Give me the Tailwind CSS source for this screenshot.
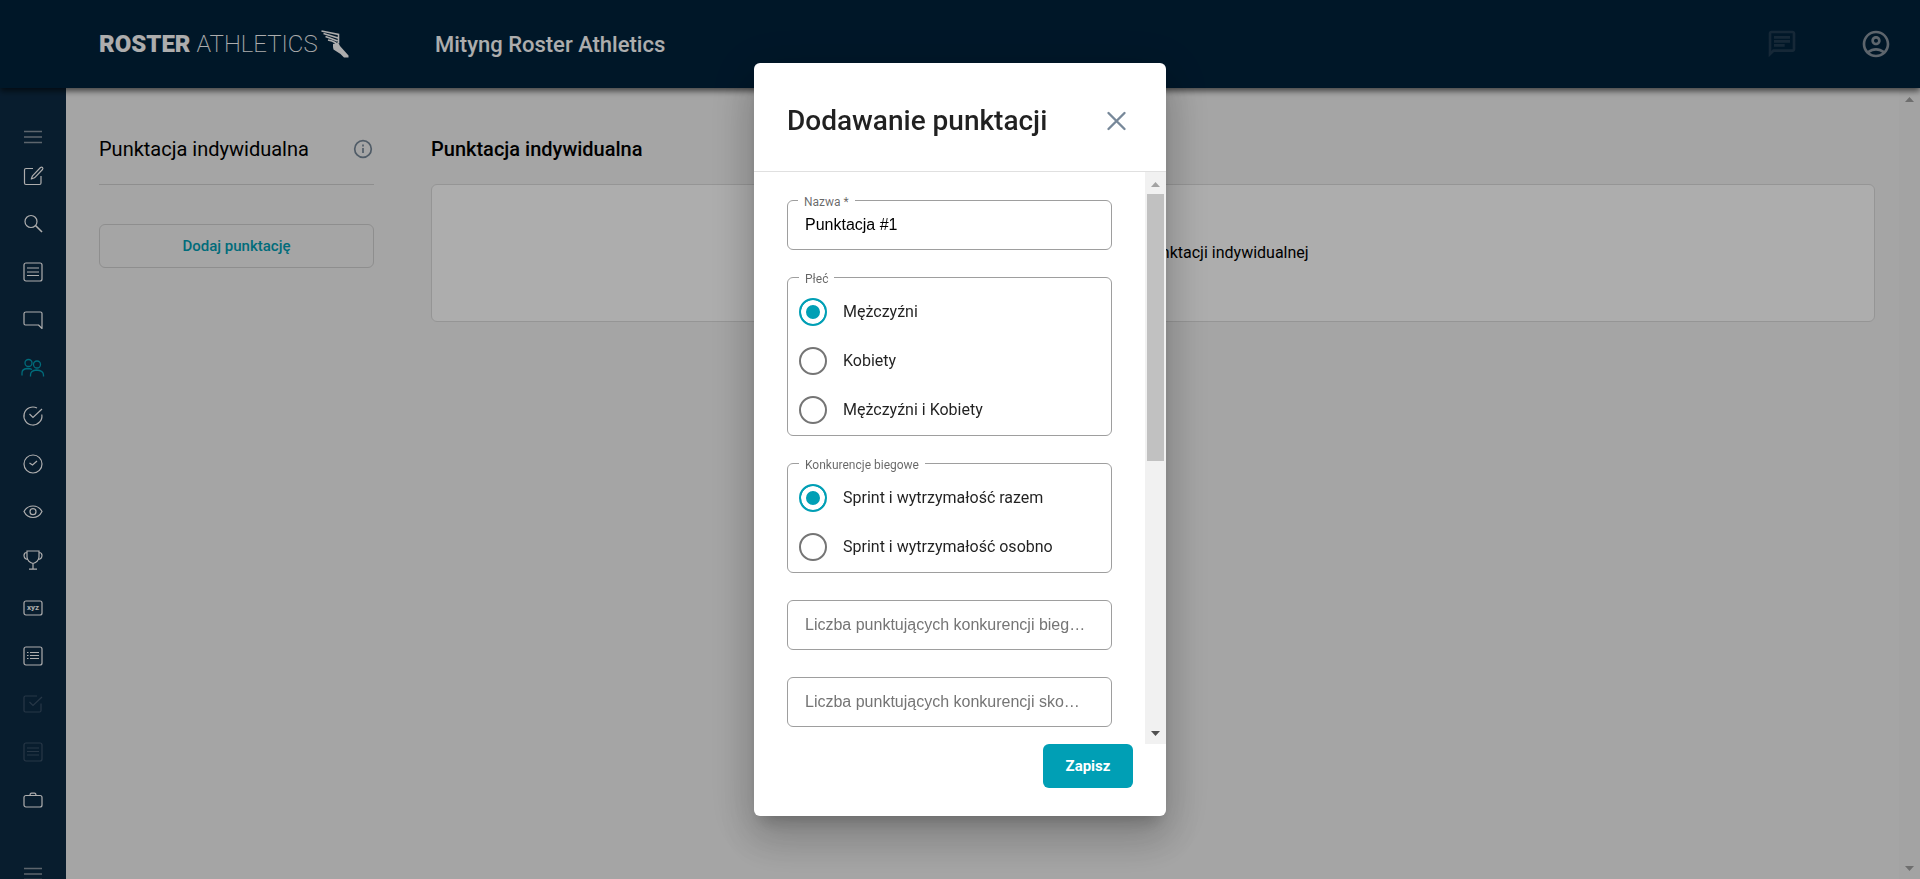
<!DOCTYPE html>
<html lang="pl">
<head>
    <meta charset="UTF-8">
    <meta name="viewport" content="width=device-width, initial-scale=1.0">
    <title>Mityng Roster Athletics - Punktacja indywidualna</title>
    <script src="https://cdn.jsdelivr.net/npm/@tailwindcss/browser@4"></script>
</head>
<body class="h-screen overflow-hidden bg-[#f3f3f3] font-[Roboto,sans-serif] text-base text-black">
    <div class="flex h-full flex-col">
        <!-- Top bar -->
        <header class="relative z-10 flex h-22 shrink-0 items-center bg-[#00223c] pr-7 pl-[99px] text-white shadow-[0_3px_6px_rgba(0,0,0,0.6)]">
            <a href="#" class="flex w-[336px] items-center text-2xl whitespace-nowrap">
                <span class="font-black">ROSTER</span><span class="ml-1.5 font-extralight">ATHLETICS</span>
                <svg class="ml-[3px]" width="28" height="28" viewBox="0 0 28 28">
                    <path d="M12 14 14 13.500 18 14 19 16 23 20.500 27.500 25.500V27.500H23L19.500 24 12.500 19.500 12 17z" fill="currentColor"/>
                    <path d="M.5 1 8 2.500 17.500 4.500V13L14 14M2.500 3.500 9 5.500 17 8M4.500 6.500 10 8.500 16.500 11M7 10l4 1 4 2" fill="none" stroke="currentColor" stroke-width="1.600"/>
                </svg>
            </a>
            <h1 class="text-[22px] font-medium">Mityng Roster Athletics</h1>
            <div class="ml-auto flex items-center gap-[62px]">
                <button type="button" aria-label="Wiadomości" class="text-[#213c52]">
                    <svg width="32" height="32" viewBox="0 0 24 24" fill="currentColor"><path d="M4 4h16v12H5.170L4 17.170V4m0-2c-1.100 0-1.990.9-1.990 2L2 22l4-4h14c1.100 0 2-.9 2-2V4c0-1.100-.9-2-2-2H4zm2 10h8v2H6v-2zm0-3h12v2H6V9zm0-3h12v2H6V6z"/></svg>
                </button>
                <button type="button" aria-label="Konto" class="text-[#8995a0]">
                    <svg width="32" height="32" viewBox="0 0 24 24" fill="currentColor"><path d="M12 2C6.480 2 2 6.480 2 12s4.480 10 10 10 10-4.480 10-10S17.520 2 12 2zM7.350 18.500C8.660 17.560 10.260 17 12 17s3.340.56 4.650 1.500C15.340 19.440 13.740 20 12 20s-3.340-.56-4.650-1.500zm10.790-1.380C16.450 15.800 14.320 15 12 15s-4.450.8-6.140 2.120C4.700 15.730 4 13.950 4 12c0-4.420 3.580-8 8-8s8 3.580 8 8c0 1.950-.7 3.730-1.860 5.120zM12 6c-1.930 0-3.500 1.570-3.500 3.500S10.070 13 12 13s3.500-1.570 3.500-3.500S13.930 6 12 6zm0 5c-.83 0-1.500-.67-1.500-1.500S11.170 8 12 8s1.500.67 1.500 1.500S12.830 11 12 11z"/></svg>
                </button>
            </div>
        </header>

        <div class="flex min-h-0 flex-1">
            <!-- Side navigation -->
            <nav class="flex w-[66px] shrink-0 flex-col items-center overflow-hidden bg-[#0d2b45] pt-[34px] text-white">
                <button type="button" aria-label="Menu" class="flex h-[30px] shrink-0 items-center">
                    <svg width="24" height="24" viewBox="0 0 24 24" fill="none" stroke="#8a96a1" stroke-width="1.300"><path d="M3 6.500h18M3 12h18M3 17.500h18"/></svg>
                </button>
                <a href="#" aria-label="Edycja" class="flex h-12 shrink-0 items-center">
                    <svg width="24" height="24" viewBox="0 0 24 24" fill="none" stroke="currentColor" stroke-width="1.200" stroke-linejoin="round"><path d="M12 4.500H5Q3.500 4.500 3.500 6v13q0 1.500 1.500 1.500h13.500q1.500 0 1.500-1.500V12M19.500 3.500q1-.8 2 0 .8 1 0 2l-8 8.300-3.200 1.200 1.200-3.200z"/></svg>
                </a>
                <a href="#" aria-label="Szukaj" class="flex h-12 shrink-0 items-center">
                    <svg width="24" height="24" viewBox="0 0 24 24" fill="none" stroke="currentColor" stroke-width="1.200"><circle cx="10" cy="9.500" r="6"/><path d="m14.500 13.500 6.500 6.500" stroke-width="1.600"/></svg>
                </a>
                <a href="#" aria-label="Lista" class="flex h-12 shrink-0 items-center">
                    <svg width="24" height="24" viewBox="0 0 24 24" fill="none" stroke="currentColor" stroke-width="1.200"><rect x="3" y="3" width="18" height="18" rx="2"/><path d="M6 8h12M6 12h12M6 15.500h12"/></svg>
                </a>
                <a href="#" aria-label="Komunikaty" class="flex h-12 shrink-0 items-center">
                    <svg width="24" height="24" viewBox="0 0 24 24" fill="none" stroke="currentColor" stroke-width="1.200" stroke-linejoin="round"><path d="M5 4h14.500Q21 4 21 5.500V20.500l-3.500-3.500H4.500Q3 17 3 15.500v-10Q3 4 5 4z"/></svg>
                </a>
                <a href="#" aria-label="Punktacja" class="flex h-12 shrink-0 items-center text-[#009fb5]">
                    <svg width="24" height="24" viewBox="0 0 24 24" fill="none" stroke="currentColor" stroke-width="1.300"><circle cx="7.500" cy="7" r="3.500"/><circle cx="16" cy="8.500" r="3.500"/><path d="M1 19.500V17q0-4 5-4.500 3.500 0 5 1M9.500 20.500V19q0-4.500 6-5 7 .5 7 5v1.500"/></svg>
                </a>
                <a href="#" aria-label="Zatwierdzanie" class="flex h-12 shrink-0 items-center">
                    <svg width="24" height="24" viewBox="0 0 24 24" fill="none" stroke="currentColor" stroke-width="1.200"><path d="M16 4A9 9 0 1 0 20.800 10.500M8.500 10l3.500 3.500L21 5"/></svg>
                </a>
                <a href="#" aria-label="Czas" class="flex h-12 shrink-0 items-center">
                    <svg width="24" height="24" viewBox="0 0 24 24" fill="none" stroke="currentColor" stroke-width="1.200"><circle cx="12" cy="12" r="9"/><path d="m8.500 11 3 2 4.500-4"/></svg>
                </a>
                <a href="#" aria-label="Podgląd" class="flex h-12 shrink-0 items-center">
                    <svg width="24" height="24" viewBox="0 0 24 24" fill="none" stroke="currentColor" stroke-width="1.200"><path d="M3 11.500Q6 6 12 6t9 5.500q-3 6-9 6t-9-6z"/><circle cx="12" cy="11.700" r="3"/></svg>
                </a>
                <a href="#" aria-label="Wyniki" class="flex h-12 shrink-0 items-center">
                    <svg width="24" height="24" viewBox="0 0 24 24" fill="none" stroke="currentColor" stroke-width="1.200"><path d="M6 3h12v6q-.5 5-6 6.500-5.500-1.500-6-6.500zM6 4.500Q3 4.500 3 7.500 3.200 11 6.500 11.500M18 4.500q3 0 3 3-.2 3.500-3.500 4M12 15.500V21M8 21.200h8"/></svg>
                </a>
                <a href="#" aria-label="XYZ" class="flex h-12 shrink-0 items-center">
                    <svg width="24" height="24" viewBox="0 0 24 24" fill="none" stroke="currentColor" stroke-width="1.200"><rect x="3" y="5" width="18" height="14" rx="2"/><text x="12" y="13.500" text-anchor="middle" font-size="8" font-weight="700" fill="currentColor" stroke="none">xyz</text></svg>
                </a>
                <a href="#" aria-label="Listy startowe" class="flex h-12 shrink-0 items-center">
                    <svg width="24" height="24" viewBox="0 0 24 24" fill="none" stroke="currentColor" stroke-width="1.200"><rect x="3" y="3" width="18" height="18" rx="2"/><path d="M9 8.500h9M9 11.500h9M9 14.500h9M6 8.500h1.500M6 11.500h1.500M6 14.500h1.500"/></svg>
                </a>
                <a href="#" aria-label="Potwierdzenia" class="flex h-12 shrink-0 items-center text-[#3a5268]">
                    <svg width="24" height="24" viewBox="0 0 24 24" fill="none" stroke="currentColor" stroke-width="1.200"><path d="M16 4H4.500Q3 4 3 5.500v13Q3 20 4.500 20h14q1.500 0 1.500-1.500V11.500M8.500 10l3.500 3.500L21 5"/></svg>
                </a>
                <a href="#" aria-label="Raporty" class="flex h-12 shrink-0 items-center text-[#3a5268]">
                    <svg width="24" height="24" viewBox="0 0 24 24" fill="none" stroke="currentColor" stroke-width="1.200"><rect x="3" y="3" width="18" height="18" rx="2"/><path d="M6 8h12M6 11.500h12M6 15h12"/></svg>
                </a>
                <a href="#" aria-label="Organizacja" class="flex h-12 shrink-0 items-center">
                    <svg width="24" height="24" viewBox="0 0 24 24" fill="none" stroke="currentColor" stroke-width="1.200"><rect x="3" y="7.500" width="18" height="11.500" rx="2"/><path d="M9 7.500Q9 5.200 10.500 5.200h3q1.500 0 1.500 2.300"/></svg>
                </a>
                <button type="button" aria-label="Rozwiń" class="mt-8 flex h-[36px] shrink-0 items-center">
                    <svg width="24" height="24" viewBox="0 0 24 24" fill="none" stroke="#8a96a1" stroke-width="1.300"><path d="M3 6.500h18M3 12h18M3 17.500h18"/></svg>
                </button>
            </nav>

            <main class="flex min-w-0 flex-1 gap-[57px] pt-10 pr-6 pl-[33px]">
                <section class="w-[275px] shrink-0">
                    <div class="flex h-[57px] items-start justify-between border-b border-[#d2d2d2] pr-px">
                        <h2 class="text-xl leading-[42px]">Punktacja indywidualna</h2>
                        <button type="button" aria-label="Informacje" class="flex h-[42px] items-center text-[#778899]">
                            <svg width="20" height="20" viewBox="0 0 20 20" fill="none" stroke="currentColor" stroke-width="1.700"><circle cx="10" cy="10" r="8.300"/><path d="M10 9v5M10 5.500v2"/></svg>
                        </button>
                    </div>
                    <button type="button" class="mt-[39px] h-11 w-full rounded-md border border-[#d2d2d2] text-[15px] font-medium text-[#009fb5]">Dodaj punktację</button>
                </section>
                <section class="min-w-0 flex-1">
                    <h2 class="h-14 text-xl leading-[42px] font-medium">Punktacja indywidualna</h2>
                    <div class="flex h-[138px] items-center justify-center rounded-md border border-[#dcdcdc] bg-white">
                        <p>Nie dodałeś jeszcze punktacji indywidualnej</p>
                    </div>
                </section>
            </main>

            <!-- Page scrollbar -->
            <div class="flex w-[21px] shrink-0 flex-col items-center justify-between bg-[#f1f1f1] pt-[9px] pb-2 text-[#a3a3a3]">
                <svg width="9" height="5" viewBox="0 0 9 5" fill="currentColor"><path d="M0 5 4.500 0 9 5z"/></svg>
                <svg width="9" height="5" viewBox="0 0 9 5" fill="currentColor"><path d="M0 0h9L4.500 5z"/></svg>
            </div>
        </div>
    </div>

    <!-- Modal -->
    <div class="fixed inset-0 z-20 flex items-center justify-center bg-black/32">
        <form role="dialog" aria-labelledby="dialog-title" class="w-[412px] rounded-md bg-white text-black/87 shadow-[0_11px_15px_-7px_rgba(0,0,0,0.2),0_24px_38px_3px_rgba(0,0,0,0.14),0_9px_46px_8px_rgba(0,0,0,0.12)]">
            <div class="flex h-[109px] items-center justify-between border-b border-[#e0e0e0] pt-2 pr-[38px] pl-[33px]">
                <h2 id="dialog-title" class="text-[28px] font-medium">Dodawanie punktacji</h2>
                <button type="button" aria-label="Zamknij" class="text-[#778899]">
                    <svg width="22" height="22" viewBox="0 0 22 22" fill="none" stroke="currentColor" stroke-width="2.400" stroke-linecap="round"><path d="m2.500 3 16 16M18.500 3l-16 16"/></svg>
                </button>
            </div>
            <div class="flex">
                <div class="flex min-w-0 flex-1 flex-col gap-[27px] pt-7 pr-[33px] pb-[17px] pl-[33px]">
                    <div class="relative">
                        <label for="name" class="absolute -top-1.5 left-[11px] bg-white px-1.5 text-xs leading-4 text-black/60">Nazwa *</label>
                        <input id="name" type="text" value="Punktacja #1" class="h-[50px] w-full rounded-md border border-[#9e9e9e] px-[17px] font-['Liberation_Sans',sans-serif] text-base text-black">
                    </div>

                    <fieldset class="rounded-md border border-[#9e9e9e] pt-[9px] pr-2 pb-px pl-[11px]">
                        <legend class="h-0 px-1.5 text-xs leading-[2px] text-black/60">Płeć</legend>
                        <label class="flex h-[49px] items-center gap-4">
                            <input type="radio" name="gender" checked class="size-7 appearance-none rounded-full border-2 border-[#757575] checked:border-[#009fb5] checked:bg-[#009fb5] checked:shadow-[inset_0_0_0_5px_#fff]">
                            Mężczyźni
                        </label>
                        <label class="flex h-[49px] items-center gap-4">
                            <input type="radio" name="gender" class="size-7 appearance-none rounded-full border-2 border-[#757575] checked:border-[#009fb5] checked:bg-[#009fb5] checked:shadow-[inset_0_0_0_5px_#fff]">
                            Kobiety
                        </label>
                        <label class="flex h-[49px] items-center gap-4">
                            <input type="radio" name="gender" class="size-7 appearance-none rounded-full border-2 border-[#757575] checked:border-[#009fb5] checked:bg-[#009fb5] checked:shadow-[inset_0_0_0_5px_#fff]">
                            Mężczyźni i Kobiety
                        </label>
                    </fieldset>

                    <fieldset class="rounded-md border border-[#9e9e9e] pt-[9px] pr-2 pb-px pl-[11px]">
                        <legend class="h-0 px-1.5 text-xs leading-[2px] text-black/60">Konkurencje biegowe</legend>
                        <label class="flex h-[49px] items-center gap-4">
                            <input type="radio" name="running" checked class="size-7 appearance-none rounded-full border-2 border-[#757575] checked:border-[#009fb5] checked:bg-[#009fb5] checked:shadow-[inset_0_0_0_5px_#fff]">
                            Sprint i wytrzymałość razem
                        </label>
                        <label class="flex h-[49px] items-center gap-4">
                            <input type="radio" name="running" class="size-7 appearance-none rounded-full border-2 border-[#757575] checked:border-[#009fb5] checked:bg-[#009fb5] checked:shadow-[inset_0_0_0_5px_#fff]">
                            Sprint i wytrzymałość osobno
                        </label>
                    </fieldset>

                    <input type="text" aria-label="Liczba punktujących konkurencji biegowych" placeholder="Liczba punktujących konkurencji biegowych" class="h-[50px] w-full rounded-md border border-[#9e9e9e] pr-[25px] pl-[17px] font-['Liberation_Sans',sans-serif] text-base text-ellipsis placeholder:text-[#757575]">
                    <input type="text" aria-label="Liczba punktujących konkurencji skokowych" placeholder="Liczba punktujących konkurencji skokowych" class="h-[50px] w-full rounded-md border border-[#9e9e9e] pr-[25px] pl-[17px] font-['Liberation_Sans',sans-serif] text-base text-ellipsis placeholder:text-[#757575]">
                </div>
                <!-- Form scrollbar -->
                <div class="flex w-[21px] shrink-0 flex-col items-center bg-[#f1f1f1] pt-2.5 pb-2">
                    <svg class="mb-[7px] shrink-0" width="9" height="5" viewBox="0 0 9 5" fill="#a3a3a3"><path d="M0 5 4.500 0 9 5z"/></svg>
                    <div class="h-[267px] w-[17px] bg-[#c1c1c1]"></div>
                    <svg class="mt-auto shrink-0" width="9" height="5" viewBox="0 0 9 5" fill="#505050"><path d="M0 0h9L4.500 5z"/></svg>
                </div>
            </div>
            <div class="flex justify-end pr-[33px] pb-7">
                <button type="submit" class="h-11 w-[90px] rounded-md bg-[#009fb5] text-[15px] font-bold text-white">Zapisz</button>
            </div>
        </form>
    </div>
</body>
</html>
